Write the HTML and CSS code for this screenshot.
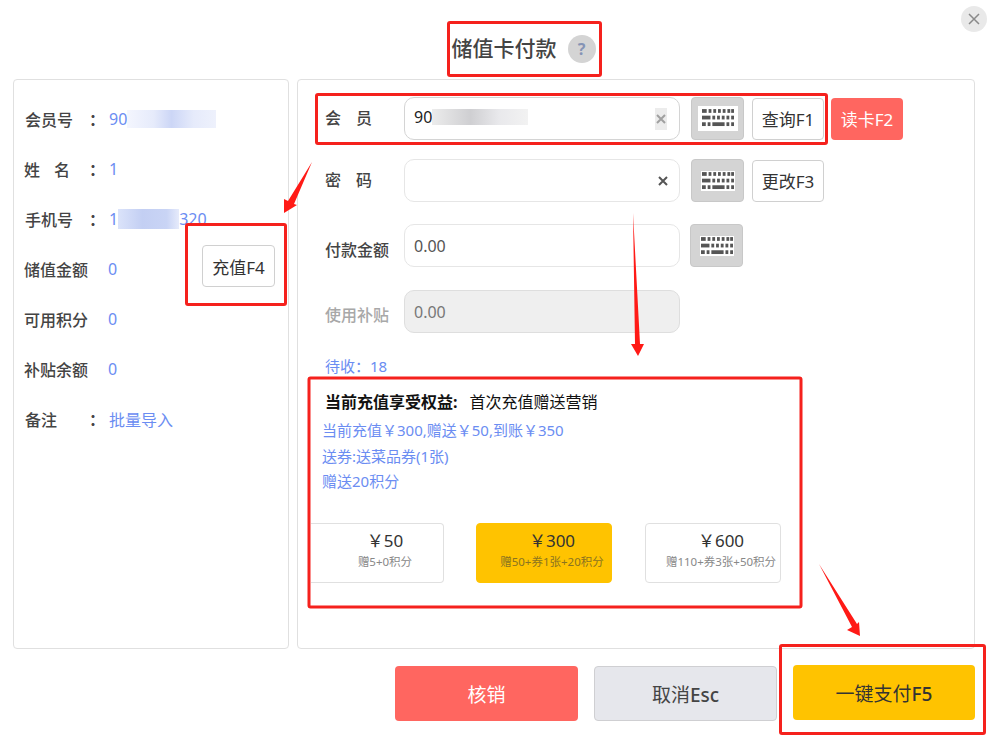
FILE: index.html
```html
<!DOCTYPE html>
<html lang="zh-CN">
<head>
<meta charset="utf-8">
<title>储值卡付款</title>
<link rel="stylesheet" href="styles.css">
</head>
<body>
<svg class="defs" width="0" height="0" aria-hidden="true">
  <symbol id="kb" viewBox="0 0 34 20">
    <g fill="#555">
      <rect x="0" y="0" width="5" height="4"/><rect x="7" y="0" width="3" height="4"/><rect x="12" y="0" width="3" height="4"/><rect x="17" y="0" width="3" height="4"/><rect x="22" y="0" width="3" height="4"/><rect x="27" y="0" width="3" height="4"/><rect x="31" y="0" width="3" height="4"/>
      <rect x="0" y="7" width="9" height="4"/><rect x="11" y="7" width="3" height="4"/><rect x="16" y="7" width="3" height="4"/><rect x="21" y="7" width="3" height="4"/><rect x="26" y="7" width="3" height="4"/><rect x="31" y="7" width="3" height="4"/>
      <rect x="0" y="14" width="4" height="4"/><rect x="6" y="14" width="3" height="4"/><rect x="11" y="14" width="13" height="4"/><rect x="26" y="14" width="3" height="4"/><rect x="31" y="14" width="3" height="4"/>
    </g>
  </symbol>
  <symbol id="x" viewBox="0 0 10 10">
    <path d="M1 1L9 9M9 1L1 9" stroke="currentColor" stroke-width="2" fill="none"/>
  </symbol>
</svg>
<div class="dialog">
  <header class="head">
    <h1 class="title">储值卡付款</h1>
    <span class="help">?</span>
  </header>
  <button class="close" type="button" aria-label="关闭">
    <svg width="12" height="12" viewBox="0 0 12 12"><path d="M1 1L11 11M11 1L1 11" stroke="#8a8a8a" stroke-width="1.5" fill="none"/></svg>
  </button>

  <main class="panels">
    <aside class="panel info">
      <div class="info-row"><span class="info-label spaced">会员号</span><span class="colon">：</span><span class="info-val">90<i class="blur b1"></i></span></div>
      <div class="info-row"><span class="info-label name"><span>姓</span><span>名</span></span><span class="colon">：</span><span class="info-val">1</span></div>
      <div class="info-row"><span class="info-label spaced">手机号</span><span class="colon">：</span><span class="info-val">1<i class="blur b2"></i>320</span></div>
      <div class="info-row"><span class="info-label">储值金额</span><span class="info-val">0</span><button class="btn recharge" type="button">充值F4</button></div>
      <div class="info-row"><span class="info-label">可用积分</span><span class="info-val">0</span></div>
      <div class="info-row"><span class="info-label">补贴余额</span><span class="info-val">0</span></div>
      <div class="info-row"><span class="info-label spaced">备注</span><span class="colon">：</span><span class="info-val">批量导入</span></div>
    </aside>

    <section class="panel form">
      <div class="form-row r1">
        <label class="form-label wide"><span>会</span><span>员</span></label>
        <div class="field active"><span class="field-text dark">90<i class="blur b3"></i></span><span class="clear soft"><svg width="10" height="10"><use href="#x"/></svg></span></div>
        <button class="kb" type="button"><span class="kb-inner first"><svg width="32" height="19"><use href="#kb"/></svg></span></button>
        <button class="btn act" type="button">查询F1</button>
        <button class="btn read" type="button">读卡F2</button>
      </div>
      <div class="form-row r2">
        <label class="form-label wide"><span>密</span><span>码</span></label>
        <div class="field"><span class="clear"><svg width="10" height="10"><use href="#x"/></svg></span></div>
        <button class="kb" type="button"><span class="kb-inner"><svg width="32" height="19"><use href="#kb"/></svg></span></button>
        <button class="btn act" type="button">更改F3</button>
      </div>
      <div class="form-row r3">
        <label class="form-label">付款金额</label>
        <div class="field"><span class="field-text">0.00</span></div>
        <button class="kb narrow" type="button"><span class="kb-inner"><svg width="32" height="19"><use href="#kb"/></svg></span></button>
      </div>
      <div class="form-row r4">
        <label class="form-label muted">使用补贴</label>
        <div class="field disabled"><span class="field-text">0.00</span></div>
      </div>
      <p class="due">待收：18</p>
      <div class="benefit">
        <p class="benefit-title"><strong>当前充值享受权益:</strong><span>首次充值赠送营销</span></p>
        <p class="benefit-line l1">当前充值￥300,赠送￥50,到账￥350</p>
        <p class="benefit-line">送券:送菜品券(1张)</p>
        <p class="benefit-line">赠送20积分</p>
        <div class="cards">
          <div class="card c1"><span class="price">￥50</span><span class="gift">赠5+0积分</span></div>
          <div class="card on"><span class="price">￥300</span><span class="gift">赠50+券1张+20积分</span></div>
          <div class="card c3"><span class="price">￥600</span><span class="gift">赠110+券3张+50积分</span></div>
        </div>
      </div>
    </section>
  </main>

  <footer class="foot">
    <button class="big verify" type="button">核销</button>
    <button class="big cancel" type="button">取消<b>Esc</b></button>
    <button class="big pay" type="button">一键支付<b>F5</b></button>
  </footer>

  <svg class="marks" width="997" height="745" viewBox="0 0 997 745" aria-hidden="true">
    <g fill="none" stroke="#f5211d" stroke-width="3" stroke-linejoin="round">
      <rect x="448.5" y="22.5" width="152" height="53" rx="1.5"/>
      <rect x="316.5" y="94.5" width="510" height="49" rx="1.5"/>
      <rect x="186.5" y="224.5" width="99" height="80" rx="1.5"/>
      <rect x="309" y="378" width="492" height="229" rx="1.5"/>
      <rect x="780.5" y="645.5" width="204" height="88" rx="1.5"/>
    </g>
    <g fill="#ff1a16">
      <path d="M312 162L294 204L297 205L284 213L284 199L288 201Z"/>
      <path d="M633 213L640 344L644 344L638 356L631 344L635 344Z"/>
      <path d="M819 564L857 624L859 622L860 636L847 630L852 627Z"/>
    </g>
  </svg>
</div>
</body>
</html>
```
FILE: styles.css
```css
* { box-sizing: border-box; }
html, body { margin: 0; padding: 0; background: #fff; }
body { font-family: "Noto Sans", "Noto Sans CJK SC", sans-serif; color: #333; }
.defs { position: absolute; }
p { margin: 0; }
button { font-family: inherit; cursor: pointer; padding: 0; }

.dialog { position: relative; width: 997px; height: 745px; overflow: hidden; }

.head { height: 79px; display: flex; align-items: center; justify-content: center; gap: 11px; padding: 17px 0 0 50px; }
.title { margin: 0; font-size: 21px; line-height: 30px; font-weight: 500; color: #444; }
.help { width: 28px; height: 28px; border-radius: 50%; background: #d4d4d4; color: #8593b5; font-size: 16px; font-weight: 700; display: flex; align-items: center; justify-content: center; margin-top: 2px; }
.close { position: absolute; top: 6px; left: 961px; width: 26px; height: 26px; border: 0; border-radius: 50%; background: #e9e9e9; display: flex; align-items: center; justify-content: center; }

.panels { display: flex; gap: 8px; padding: 0 22px 0 13px; height: 570px; }
.panel { border: 1px solid #e0e0e0; border-radius: 4px; background: #fff; }

.info { width: 276px; padding: 15px 12px 0 10px; }
.info-row { height: 50px; display: flex; align-items: center; font-size: 16px; position: relative; }
.info-label { width: 84px; font-weight: 500; color: #444; margin-top: -2px; }
.info-label.spaced { width: 64px; margin-left: 1px; }
.info-label.name { width: 65px; display: flex; gap: 14px; }
.colon { width: 20px; font-weight: 700; color: #444; margin-top: -2px; }
.info-val { color: #6b8df2; display: flex; align-items: center; margin-top: -2px; }
.blur { display: inline-block; height: 18px; }
.b1 { width: 89px; background: linear-gradient(90deg, #f4f6fe 0%, #e6ebfb 30%, #ccd6f6 50%, #e6ebfb 75%, #eef1fc 100%); }
.b2 { width: 61px; height: 20px; background: linear-gradient(90deg, #dbe3fa 0%, #c3cff3 40%, #c9d4f5 80%, #e6ebfb 100%); }
.b3 { width: 96px; height: 16px; background: linear-gradient(90deg, #ececec 0%, #cfcfd2 40%, #e9e9ec 70%, #f2f2f2 100%); }
.recharge { position: absolute; left: 178px; top: 0; width: 73px; height: 42px; }

.btn { border: 1px solid #d0d0d0; border-radius: 4px; background: #fff; color: #333; font-size: 17px; }
.form { flex: 1; padding: 17px 0 0 27px; }
.form-row { display: flex; align-items: center; height: 43px; }
.r2 { margin-top: 19px; }
.r3 { margin-top: 22px; }
.r4 { margin-top: 23px; }
.form-label { width: 79px; font-size: 16px; font-weight: 500; color: #444; display: flex; padding-top: 6px; }
.form-label.wide { gap: 15px; padding-top: 0; margin-top: -3px; }
.form-label.muted { color: #a8a8a8; padding-top: 5px; }
.field { position: relative; width: 276px; height: 43px; border: 1px solid #e6e6e6; border-radius: 10px; background: #fff; display: flex; align-items: center; padding: 0 9px; flex: none; }
.field.active { border-color: #d4d4d4; }
.field.disabled { background: #efefef; border-color: #dedede; }
.field-text { font-size: 16px; color: #555; display: flex; align-items: center; }
.field-text.dark { color: #222; margin-top: -3px; }
.disabled .field-text { color: #777; }
.clear { position: absolute; right: 11px; top: 50%; transform: translateY(-50%); color: #555; display: flex; }
.clear.soft { background: #ececec; color: #a0a0a0; padding: 6px 1px; right: 12px; }
.kb { flex: none; width: 53px; height: 43px; margin-left: 11px; border: 1px solid #c8c8c8; border-radius: 4px; background: #d4d4d4; display: flex; align-items: center; justify-content: center; }
.kb.narrow { margin-left: 10px; }
.kb-inner { background: #fff; padding: 1px 1px 0; display: flex; }
.kb-inner svg { display: block; }
.kb-inner.first { padding: 3px 4px; }
.act { width: 72px; height: 42px; margin-left: 8px; }
.read { width: 72px; height: 42px; margin-left: 7px; border: 0; background: #ff6660; color: #fff; }

.due { margin-top: 23px; font-size: 15px; line-height: 20px; color: #6b8df2; }
.benefit { padding-top: 15px; margin-left: -3px; }
.benefit-title { font-size: 16px; line-height: 22px; color: #111; margin-left: 3px; display: flex; gap: 12px; }
.benefit-title strong { font-weight: 700; }
.benefit-line { font-size: 15px; line-height: 20px; color: #6b8df2; margin-top: 5.5px; }
.benefit-line.l1 { margin-top: 7px; }
.cards { display: flex; gap: 32px; margin: 32px 0 0 -11px; width: 482px; overflow: hidden; }
.card { flex: none; width: 136px; height: 60px; border: 1px solid #e0e0e0; border-radius: 4px; background: #fff; display: flex; flex-direction: column; align-items: center; padding: 4px 0 0 16px; }
.card.c1 { width: 133px; border-left: 0; border-radius: 0 4px 4px 0; }
.card.c3 { margin-left: 1px; }
.card.on { background: #ffc300; border-color: #ffc300; }
.price { font-size: 17px; line-height: 25px; color: #333; }
.gift { font-size: 11.5px; line-height: 18px; color: #888; white-space: nowrap; }
.on .gift { color: #8a7320; }

.foot { display: flex; justify-content: flex-end; align-items: flex-start; gap: 16px; padding: 16px 22px 0 0; }
.big { width: 183px; height: 55px; border: 0; border-radius: 4px; font-size: 19px; font-weight: 400; margin-top: 1px; }
.big b { font-weight: 500; }
.verify { background: #ff6660; color: #fff; }
.cancel { background: #e6e7ec; color: #444; border: 1px solid #cfcfd2; width: 183px; }
.pay { width: 182px; background: #ffc300; color: #333; margin-top: 0; }

.marks { position: absolute; left: 0; top: 0; pointer-events: none; }
```
